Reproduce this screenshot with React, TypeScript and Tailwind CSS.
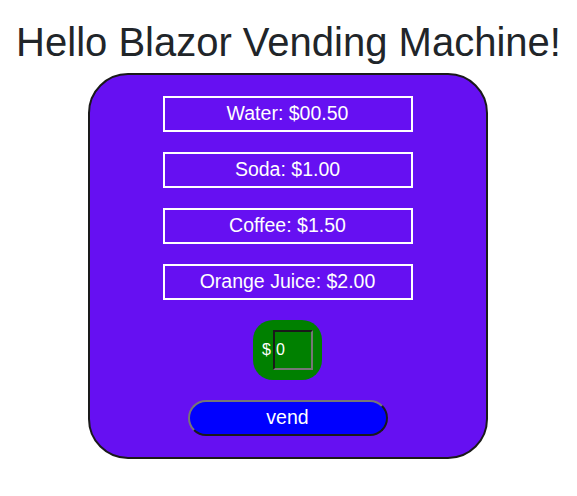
import React, { useState } from "react";

const ITEMS = [
  { name: "Water", price: "$00.50" },
  { name: "Soda", price: "$1.00" },
  { name: "Coffee", price: "$1.50" },
  { name: "Orange Juice", price: "$2.00" },
];

export default function App() {
  const [money, setMoney] = useState("0");

  return (
    <div className="flex flex-col items-center bg-white font-['Liberation_Sans',Arial,sans-serif] text-[#212529]">
      <h1 className="mt-[18px] text-[40px] leading-[48px]">Hello Blazor Vending Machine!</h1>

      {/* machine */}
      <div className="mt-[7px] ml-[-2px] flex w-[400px] flex-col items-center rounded-[40px] border-2 border-[#1a1a1a] bg-[#6610f2] pt-[21px] pb-[21px]">
        {ITEMS.map((item) => (
          <div
            key={item.name}
            className="mb-[20px] flex h-[36px] w-[250px] items-center justify-center border-2 border-white text-[19.5px] text-white"
          >
            {item.name}: {item.price}
          </div>
        ))}

        <div className="flex h-[60px] w-[69px] items-center justify-center gap-[2px] rounded-[20px] bg-[#008000] text-white">
          <span className="text-[16px]">$</span>
          <input
            value={money}
            onChange={(e) => setMoney(e.target.value)}
            className="h-[40px] w-[40px] border-2 border-t-[#1a1a1a] border-l-[#1a1a1a] border-r-[#767676] border-b-[#767676] bg-transparent px-[1px] text-[16px] text-white outline-none"
          />
        </div>

        <button
          type="button"
          className="mt-[20px] h-[36px] w-[200px] rounded-full border-2 border-t-[#767676] border-l-[#767676] border-r-[#1a1a1a] border-b-[#1a1a1a] bg-[#0000ff] text-[19.5px] text-white"
        >
          vend
        </button>
      </div>
    </div>
  );
}
